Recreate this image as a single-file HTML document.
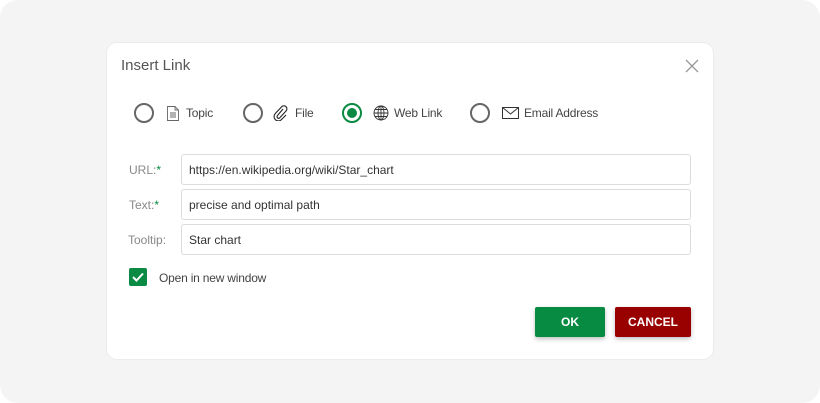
<!DOCTYPE html>
<html><head><style>
*{margin:0;padding:0;box-sizing:border-box}
body{width:820px;height:403px;background:#fff;font-family:"Segoe UI","Liberation Sans",sans-serif;position:relative;overflow:hidden}
.bg{position:absolute;left:0;top:0;width:820px;height:403px;background:#f4f4f4;border-radius:18px}
.dlg{position:absolute;left:107px;top:43px;width:606px;height:316px;background:#fff;border-radius:10px;box-shadow:0 0 0 1px #ececec}
.a{position:absolute}
.title{left:14px;top:14px;font-size:15px;color:#555}
.radio{width:20px;height:20px;border:2px solid #666;border-radius:50%}
.radio.on{border-color:#0a8a42}
.radio.on::after{content:"";position:absolute;left:3px;top:3px;width:10px;height:10px;border-radius:50%;background:#0a8a42}
.lbl{font-size:12px;color:#444;letter-spacing:-0.2px}
.flbl{font-size:12px;color:#888;left:22px}
.flbl b{color:#0a8a42;font-weight:normal}
.inp{left:74px;width:510px;height:31px;border:1px solid #dcdcdc;border-radius:3px;font-size:12px;color:#333;padding:8px 7px}
.btn{height:30px;border-radius:2px;color:#fff;font-weight:bold;font-size:12px;text-align:center;line-height:30px;box-shadow:0 2px 5px rgba(0,0,0,.25);font-family:"Liberation Sans",sans-serif}
</style></head><body>
<div class="bg"></div>
<div class="dlg">
<div class="a title">Insert Link</div>
<svg class="a" style="left:578px;top:16px" width="14" height="14"><path d="M1 1L13 13M13 1L1 13" stroke="#999" stroke-width="1.3"/></svg>

<div class="a radio" style="left:27px;top:60px"></div>
<svg class="a" style="left:60px;top:63px" width="12" height="15"><path d="M0.5 0.5H8L11.5 4V14.5H0.5Z M8 0.5V4H11.5 M3 7H9M3 9H9M3 11H9" fill="none" stroke="#666" stroke-width="0.9"/></svg>
<div class="a lbl" style="left:79px;top:63px">Topic</div>

<div class="a radio" style="left:136px;top:60px"></div>
<svg class="a" style="left:166px;top:62px" width="15" height="16"><path d="M10 4L4.5 10.5a1.6 1.6 0 0 0 2.3 2.3L13 6a3 3 0 0 0-4.3-4.3L2.3 8.5a4.3 4.3 0 0 0 6.1 6.1L13 10" fill="none" stroke="#222" stroke-width="1.1"/></svg>
<div class="a lbl" style="left:188px;top:63px">File</div>

<div class="a radio on" style="left:235px;top:60px"></div>
<svg class="a" style="left:266px;top:62px" width="16" height="16"><g fill="none" stroke="#333" stroke-width="0.9"><circle cx="8" cy="8" r="7"/><ellipse cx="8" cy="8" rx="3" ry="7"/><path d="M8 1V15M1 8H15M2 4.5H14M2 11.5H14"/></g></svg>
<div class="a lbl" style="left:287px;top:63px">Web Link</div>

<div class="a radio" style="left:363px;top:60px"></div>
<svg class="a" style="left:395px;top:64px" width="17" height="12"><path d="M0.5 0.5H16.5V11.5H0.5Z M0.5 0.5L8.5 7L16.5 0.5" fill="none" stroke="#333" stroke-width="1"/></svg>
<div class="a lbl" style="left:417px;top:63px">Email Address</div>

<div class="a flbl" style="top:120px">URL:<b>*</b></div>
<div class="a inp" style="top:111px">https://en.wikipedia.org/wiki/Star_chart</div>
<div class="a flbl" style="top:155px">Text:<b>*</b></div>
<div class="a inp" style="top:146px">precise and optimal path</div>
<div class="a flbl" style="top:190px;left:21px">Tooltip:</div>
<div class="a inp" style="top:181px">Star chart</div>

<div class="a" style="left:22px;top:225px;width:18px;height:18px;background:#0a8a42;border-radius:2px"><svg width="18" height="18"><path d="M4 9L7.5 12.5L14 5.5" fill="none" stroke="#fff" stroke-width="2"/></svg></div>
<div class="a lbl" style="left:52px;top:228px">Open in new window</div>

<div class="a btn" style="left:428px;top:264px;width:70px;background:#078a42">OK</div>
<div class="a btn" style="left:508px;top:264px;width:76px;background:#990000">CANCEL</div>
</div>
</body></html>
